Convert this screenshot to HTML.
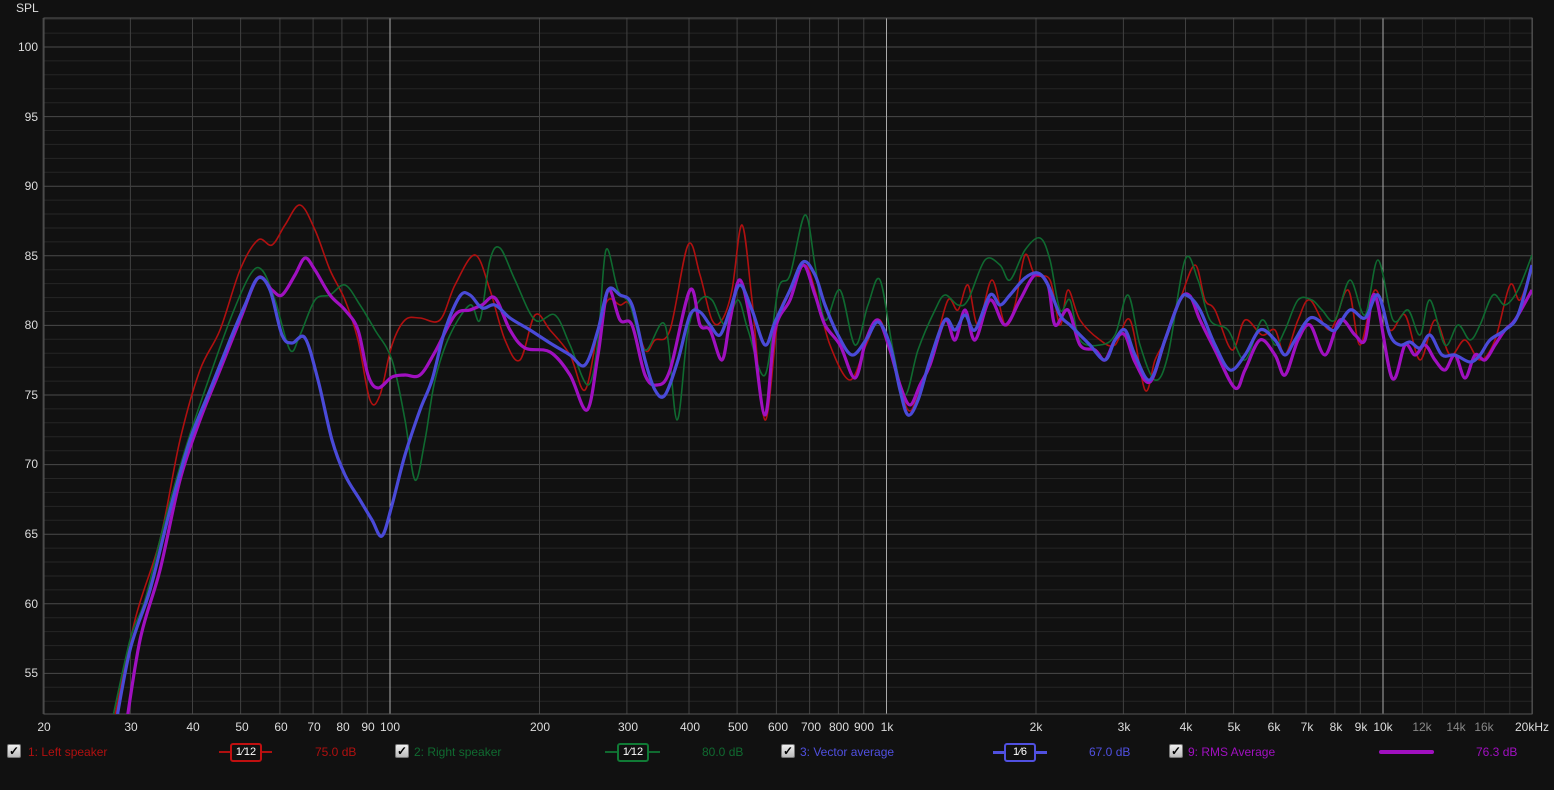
<!DOCTYPE html>
<html><head><meta charset="utf-8"><style>
html,body{margin:0;padding:0;background:#111;width:1554px;height:790px;overflow:hidden;font-family:"Liberation Sans",sans-serif;}
.t{position:absolute;font-size:12px;color:#ddd;white-space:nowrap;line-height:14px}
.yl{position:absolute;font-size:12px;color:#ddd;right:1516px;line-height:14px;text-align:right}
.xl{position:absolute;font-size:12px;color:#ddd;top:720px;line-height:14px;transform:translateX(-50%)}
.g{color:#888}
.cb{position:absolute;top:744px;width:12px;height:12px;background:linear-gradient(#f0f0f0,#bbb);border:1px solid #777;border-radius:2px;font-size:12px;line-height:12px;color:#000;text-align:center;font-weight:bold}
.lg{position:absolute;top:745px;font-size:12px;line-height:14px}
.seg{position:absolute;top:751px;height:2px}
.box{position:absolute;top:743px;width:28px;height:15px;border:2px solid;border-radius:3px;background:#111;color:#fff;font-size:11px;line-height:15px;text-align:center}
</style></head><body>
<div class="t" style="left:16px;top:1px">SPL</div>
<div class="yl" style="top:40px">100</div>
<div class="yl" style="top:110px">95</div>
<div class="yl" style="top:179px">90</div>
<div class="yl" style="top:249px">85</div>
<div class="yl" style="top:318px">80</div>
<div class="yl" style="top:388px">75</div>
<div class="yl" style="top:457px">70</div>
<div class="yl" style="top:527px">65</div>
<div class="yl" style="top:597px">60</div>
<div class="yl" style="top:666px">55</div>
<svg id="s" width="1554" height="790" style="position:absolute;left:0;top:0"></svg>
<div class="xl" style="left:44px">20</div>
<div class="xl" style="left:131px">30</div>
<div class="xl" style="left:193px">40</div>
<div class="xl" style="left:242px">50</div>
<div class="xl" style="left:281px">60</div>
<div class="xl" style="left:314px">70</div>
<div class="xl" style="left:343px">80</div>
<div class="xl" style="left:368px">90</div>
<div class="xl" style="left:390px">100</div>
<div class="xl" style="left:540px">200</div>
<div class="xl" style="left:628px">300</div>
<div class="xl" style="left:690px">400</div>
<div class="xl" style="left:738px">500</div>
<div class="xl" style="left:778px">600</div>
<div class="xl" style="left:811px">700</div>
<div class="xl" style="left:839px">800</div>
<div class="xl" style="left:864px">900</div>
<div class="xl" style="left:887px">1k</div>
<div class="xl" style="left:1036px">2k</div>
<div class="xl" style="left:1124px">3k</div>
<div class="xl" style="left:1186px">4k</div>
<div class="xl" style="left:1234px">5k</div>
<div class="xl" style="left:1274px">6k</div>
<div class="xl" style="left:1307px">7k</div>
<div class="xl" style="left:1336px">8k</div>
<div class="xl" style="left:1361px">9k</div>
<div class="xl" style="left:1383px">10k</div>
<div class="xl g" style="left:1422px">12k</div>
<div class="xl g" style="left:1456px">14k</div>
<div class="xl g" style="left:1484px">16k</div>
<div class="xl" style="left:1532px">20kHz</div>

<div class="cb" style="left:7px">✓</div><div class="lg" style="left:28px;color:#b01010">1: Left speaker</div>
<div class="seg" style="left:219px;width:53px;background:#b01010"></div><div class="box" style="left:230px;border-color:#c01010">1⁄12</div>
<div class="lg" style="left:315px;color:#b01010">75.0 dB</div>
<div class="cb" style="left:395px">✓</div><div class="lg" style="left:414px;color:#106a30">2: Right speaker</div>
<div class="seg" style="left:605px;width:55px;background:#106a30"></div><div class="box" style="left:617px;border-color:#107a35">1⁄12</div>
<div class="lg" style="left:702px;color:#106a30">80.0 dB</div>
<div class="cb" style="left:781px">✓</div><div class="lg" style="left:800px;color:#5050e0">3: Vector average</div>
<div class="seg" style="left:993px;width:54px;background:#5050e0;height:3px"></div><div class="box" style="left:1004px;border-color:#5050e0">1⁄6</div>
<div class="lg" style="left:1089px;color:#5050e0">67.0 dB</div>
<div class="cb" style="left:1169px">✓</div><div class="lg" style="left:1188px;color:#a010c0">9: RMS Average</div>
<div class="seg" style="left:1379px;width:55px;background:#a010c0;height:4px;top:750px;border-radius:2px"></div>
<div class="lg" style="left:1476px;color:#a010c0">76.3 dB</div>
<script>
var s=document.getElementById('s'),h='';
function X(f){return 43+(Math.log10(f)-1.30103)*496.5}
var L=44,R=1532,T=18,B=714;
for(var d=52;d<=102;d++){var y=47+(100-d)*13.92;if(y<T||y>B)continue;h+='<line x1="'+L+'" x2="'+R+'" y1="'+y.toFixed(1)+'" y2="'+y.toFixed(1)+'" stroke="'+(d%5==0?'#4a4a4a':'#262626')+'"/>';}
[10,100,1000,10000].forEach(function(dec){for(var m=1;m<10;m+=1){var f=dec*m;if(f<20||f>20000)continue;var x=X(f);var c=(m==1&&dec>=100)?'#aaa':'#404040';h+='<line x1="'+x.toFixed(1)+'" x2="'+x.toFixed(1)+'" y1="'+T+'" y2="'+B+'" stroke="'+c+'"/>';}});
[12000,14000,16000,18000].forEach(function(f){var x=X(f);h+='<line x1="'+x.toFixed(1)+'" x2="'+x.toFixed(1)+'" y1="'+T+'" y2="'+B+'" stroke="#2c2c2c"/>';});
h+='<rect x="'+L+'" y="'+T+'" width="'+(R-L)+'" height="'+(B-T)+'" fill="none" stroke="#555"/>';
h+='<clipPath id="c"><rect x="'+L+'" y="'+T+'" width="'+(R-L)+'" height="'+(B-T)+'"/></clipPath>';
function P(a){var p=[];for(var i=0;i<a.length;i+=2)p.push([a[i],a[i+1]]);var d='M'+p[0][0]+','+p[0][1];for(var i=0;i<p.length-1;i++){var p0=p[i-1]||p[i],p1=p[i],p2=p[i+1],p3=p[i+2]||p2;d+='C'+(p1[0]+(p2[0]-p0[0])/6).toFixed(1)+','+(p1[1]+(p2[1]-p0[1])/6).toFixed(1)+' '+(p2[0]-(p3[0]-p1[0])/6).toFixed(1)+','+(p2[1]-(p3[1]-p1[1])/6).toFixed(1)+' '+p2[0]+','+p2[1];}return d}
var red=[110,740,135,620,160,540,180,440,200,370,220,330,240,270,258,240,272,245,285,225,300,205,315,230,330,270,345,300,358,340,370,400,380,395,392,345,405,320,420,318,440,320,455,285,475,255,490,290,505,340,520,360,535,315,550,330,570,355,585,390,598,330,608,300,620,305,630,305,645,350,655,340,670,330,688,245,700,275,712,320,722,320,732,290,742,225,752,300,765,420,778,320,790,290,805,265,815,290,830,345,850,380,866,345,880,320,895,370,908,410,918,395,935,345,948,300,958,310,968,285,978,325,992,280,1005,325,1015,305,1025,255,1035,275,1050,280,1060,325,1068,290,1080,320,1100,340,1115,345,1130,320,1145,390,1155,360,1165,340,1180,300,1195,265,1205,300,1215,310,1232,350,1245,320,1262,335,1275,330,1285,355,1298,320,1310,300,1330,330,1348,290,1360,345,1375,290,1390,330,1405,315,1420,360,1435,320,1450,355,1465,340,1480,360,1495,340,1510,285,1520,300,1532,265];
var green=[108,740,130,640,145,600,165,520,185,450,205,390,230,320,250,275,262,270,275,300,290,350,300,335,315,300,330,295,345,285,360,305,375,330,392,360,405,420,415,480,425,440,435,380,450,335,470,305,480,320,490,260,500,248,515,280,535,320,555,315,570,345,588,385,598,340,606,250,618,290,630,305,645,350,665,325,677,420,688,330,700,300,712,300,725,325,738,300,748,330,765,375,778,290,790,275,805,215,815,265,825,320,840,290,855,345,868,305,880,280,893,350,905,395,918,350,935,310,945,295,958,305,968,300,985,260,1000,265,1010,280,1025,250,1040,238,1050,260,1060,310,1070,300,1080,340,1100,345,1115,335,1128,295,1140,345,1155,380,1168,355,1185,260,1198,280,1210,320,1228,330,1245,360,1262,320,1275,345,1285,330,1298,300,1312,300,1322,310,1335,320,1350,280,1365,315,1378,260,1393,320,1408,310,1420,335,1430,300,1445,345,1458,325,1470,340,1480,325,1493,295,1505,305,1518,290,1532,255];
var blue=[113,740,130,650,150,590,170,510,190,440,210,390,230,340,245,305,258,278,270,290,282,335,292,343,305,338,318,380,332,440,345,475,360,500,372,520,382,536,392,505,405,455,420,410,432,380,445,330,460,296,470,295,482,308,495,305,510,318,530,330,550,343,570,355,585,365,598,330,608,290,620,295,632,305,645,360,655,390,665,395,678,360,690,315,700,312,710,325,720,335,730,310,740,285,752,310,765,345,775,322,790,290,803,262,815,275,825,305,838,335,852,355,866,340,878,322,890,345,900,390,908,415,918,400,930,360,945,320,955,330,965,315,975,330,990,295,1000,305,1010,295,1025,278,1038,273,1048,285,1060,315,1070,325,1080,335,1090,345,1105,360,1115,340,1125,330,1135,355,1150,380,1165,340,1180,300,1188,296,1200,310,1215,345,1230,370,1245,355,1260,330,1275,340,1285,355,1295,340,1310,318,1325,325,1335,330,1350,310,1365,318,1378,295,1390,335,1400,345,1410,342,1420,348,1430,335,1442,355,1455,355,1470,362,1480,355,1490,340,1505,330,1518,315,1532,265];
var purp=[124,740,140,640,160,570,180,480,200,420,220,370,240,320,258,278,272,290,282,295,295,275,305,258,315,270,330,295,345,310,358,330,368,375,378,388,392,377,405,375,420,375,435,352,455,315,470,310,482,305,495,298,510,330,525,348,550,352,570,375,587,410,598,355,608,290,620,320,632,325,645,375,657,385,670,370,690,290,700,325,710,330,722,360,730,320,740,280,752,330,765,415,775,330,790,300,803,265,815,295,825,325,840,345,855,378,866,340,878,320,890,350,900,385,910,405,920,385,930,365,945,320,955,340,965,310,975,340,990,300,1005,325,1020,300,1035,275,1048,285,1055,325,1068,310,1080,345,1095,350,1105,360,1115,340,1125,335,1135,362,1150,382,1165,340,1180,300,1190,296,1200,320,1215,350,1235,388,1245,370,1260,340,1275,355,1285,375,1298,340,1310,325,1325,355,1340,320,1355,335,1365,340,1375,295,1392,378,1405,345,1415,355,1425,345,1435,360,1445,370,1455,355,1465,378,1475,355,1485,360,1495,345,1505,330,1515,320,1532,290];
h+='<g clip-path="url(#c)" fill="none" stroke-linejoin="round">';
h+='<path d="'+P(red)+'" stroke="#b01010" stroke-width="1.6"/>';
h+='<path d="'+P(green)+'" stroke="#0f6a30" stroke-width="1.6"/>';
h+='<path d="'+P(purp)+'" stroke="#a010c0" stroke-width="3.2"/>';
h+='<path d="'+P(blue)+'" stroke="#4a4ad8" stroke-width="3.2"/>';
h+='</g>';
s.innerHTML=h;
</script>
</body></html>
